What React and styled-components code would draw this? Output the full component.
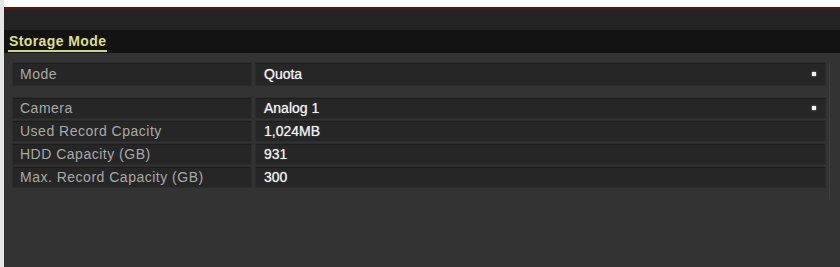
import React from "react";
import styled, { createGlobalStyle } from "styled-components";

const Global = createGlobalStyle`
  html, body {
    margin: 0;
    padding: 0;
    background: #ffffff;
  }
  body {
    font-family: "Liberation Sans", Arial, sans-serif;
  }
`;

const Page = styled.div`
  width: 840px;
  height: 267px;
  padding: 7px 0 0 4px;
  box-sizing: border-box;
  background: linear-gradient(to right, #e6e6e6 0, #e6e6e6 4px, #ffffff 4px);
  overflow: hidden;
`;

const Window = styled.div`
  height: 260px;
  border-top: 3px solid #4c1a1c;
  background: #333333;
  display: flex;
  flex-direction: column;
`;

const TitleBar = styled.div`
  height: 20px;
  background: #232323;
`;

const TabBar = styled.div`
  height: 23px;
  background: #131313;
  display: flex;
  align-items: flex-end;
  padding-left: 4px;
`;

const Tab = styled.div`
  color: #dede8a;
  font-size: 14px;
  font-weight: bold;
  letter-spacing: 0.4px;
  padding: 0 1px 1px;
  border-bottom: 2px solid #cfcf8c;
  margin-bottom: 1px;
  line-height: 15px;
`;

const Content = styled.div`
  flex: 1;
  padding: 9px 10px 0 8px;
`;

const Group = styled.div`
  display: flex;
  flex-direction: column;
  padding-right: 3px;
  border-right: 1px solid #3e3e3e;
  padding-bottom: 10px;
`;

const Row = styled.div`
  display: flex;
  gap: 3px;
  height: ${(p) => (p.$tall ? 24 : 22)}px;
  margin-bottom: ${(p) => (p.$spaced ? 11 : 1)}px;
`;

const Cell = styled.div`
  background: #262626;
  border: 1px solid #2c2c2c;
  box-shadow: inset 0 1px 0 #1e1e1e;
  box-sizing: border-box;
  display: flex;
  align-items: center;
  font-size: 14px;
  position: relative;
`;

const Label = styled(Cell)`
  width: 240px;
  padding-left: 7px;
  color: #a9a9a9;
  letter-spacing: 0.5px;
`;

const Value = styled(Cell)`
  flex: 1;
  padding-left: 8px;
  color: #f0f0f0;
  text-shadow: 0 0 1px #bdbdbd;
`;

const Dot = styled.span`
  position: absolute;
  right: 9px;
  top: 50%;
  width: 4px;
  height: 4px;
  margin-top: -2px;
  background: #f2f2f2;
  box-shadow: 0 0 2px #bbbbbb;
`;

const rows = [
  { label: "Camera", value: "Analog 1", select: true },
  { label: "Used Record Cpacity", value: "1,024MB" },
  { label: "HDD Capacity (GB)", value: "931" },
  { label: "Max. Record Capacity (GB)", value: "300" },
];

export default function App() {
  return (
    <Page>
      <Global />
      <Window>
        <TitleBar />
        <TabBar>
          <Tab>Storage Mode</Tab>
        </TabBar>
        <Content>
          <Group>
            <Row $tall $spaced>
              <Label>Mode</Label>
              <Value>
                Quota
                <Dot />
              </Value>
            </Row>
            {rows.map((r) => (
              <Row key={r.label}>
                <Label>{r.label}</Label>
                <Value>
                  {r.value}
                  {r.select && <Dot />}
                </Value>
              </Row>
            ))}
          </Group>
        </Content>
      </Window>
    </Page>
  );
}
